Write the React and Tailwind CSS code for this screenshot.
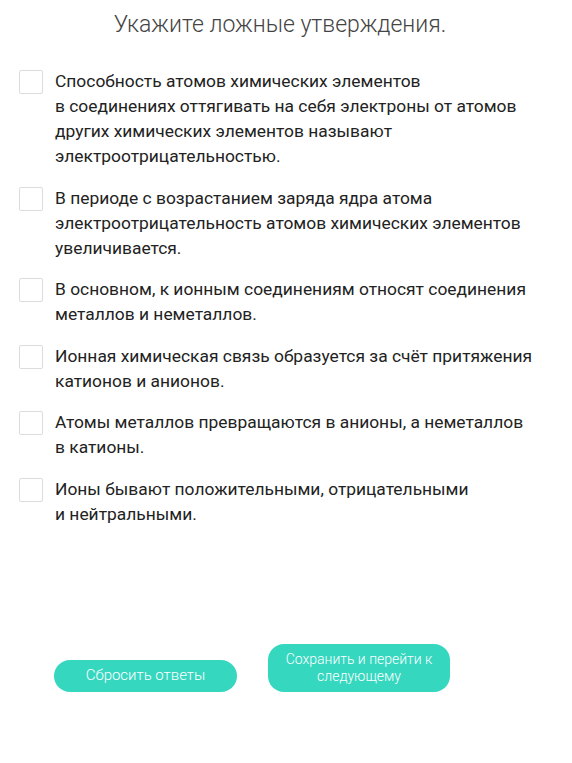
import React from "react";

const items = [
  ["Способность атомов химических элементов", "в соединениях оттягивать на себя электроны от атомов других химических элементов называют электроотрицательностью."],
  ["В периоде с возрастанием заряда ядра атома электроотрицательность атомов химических элементов увеличивается."],
  ["В основном, к ионным соединениям относят соединения металлов и неметаллов."],
  ["Ионная химическая связь образуется за счёт притяжения катионов и анионов."],
  ["Атомы металлов превращаются в анионы, а неметаллов в\u00a0катионы."],
  ["Ионы бывают положительными, отрицательными", "и нейтральными."],
];

export default function App() {
  return (
    <div className="min-h-screen bg-white font-['Roboto',sans-serif]">
      <div className="px-[19px] pt-[9px]">
        <h1 className="text-center text-[23px] leading-[32px] font-light text-[#444] pr-[12px]">
          Укажите ложные утверждения.
        </h1>

        <div className="mt-[28px] flex flex-col gap-[16.5px]">
          {items.map((parts, i) => (
            <label key={i} className="flex items-start gap-[12px] pr-[8px]">
              <span className="mt-[1px] w-[24px] h-[24px] shrink-0 border border-[#dcdcdc] rounded-[2px] bg-white" />
              <span className="text-[17.4px] leading-[25px] text-[#222]">
                {parts.map((p, j) => (
                  <React.Fragment key={j}>
                    {j > 0 && <br />}
                    {p}
                  </React.Fragment>
                ))}
              </span>
            </label>
          ))}
        </div>

        <div className="mt-[117px] flex items-end gap-[31px] pl-[35px]">
          <button className="w-[183px] h-[32px] rounded-full bg-[#36d7bf] text-white font-light text-[15px]">
            Сбросить ответы
          </button>
          <button className="w-[182px] h-[48px] rounded-[16px] bg-[#36d7bf] text-white font-light text-[14px] leading-[17px] px-[12px]">
            Сохранить и перейти к следующему
          </button>
        </div>
      </div>
    </div>
  );
}
